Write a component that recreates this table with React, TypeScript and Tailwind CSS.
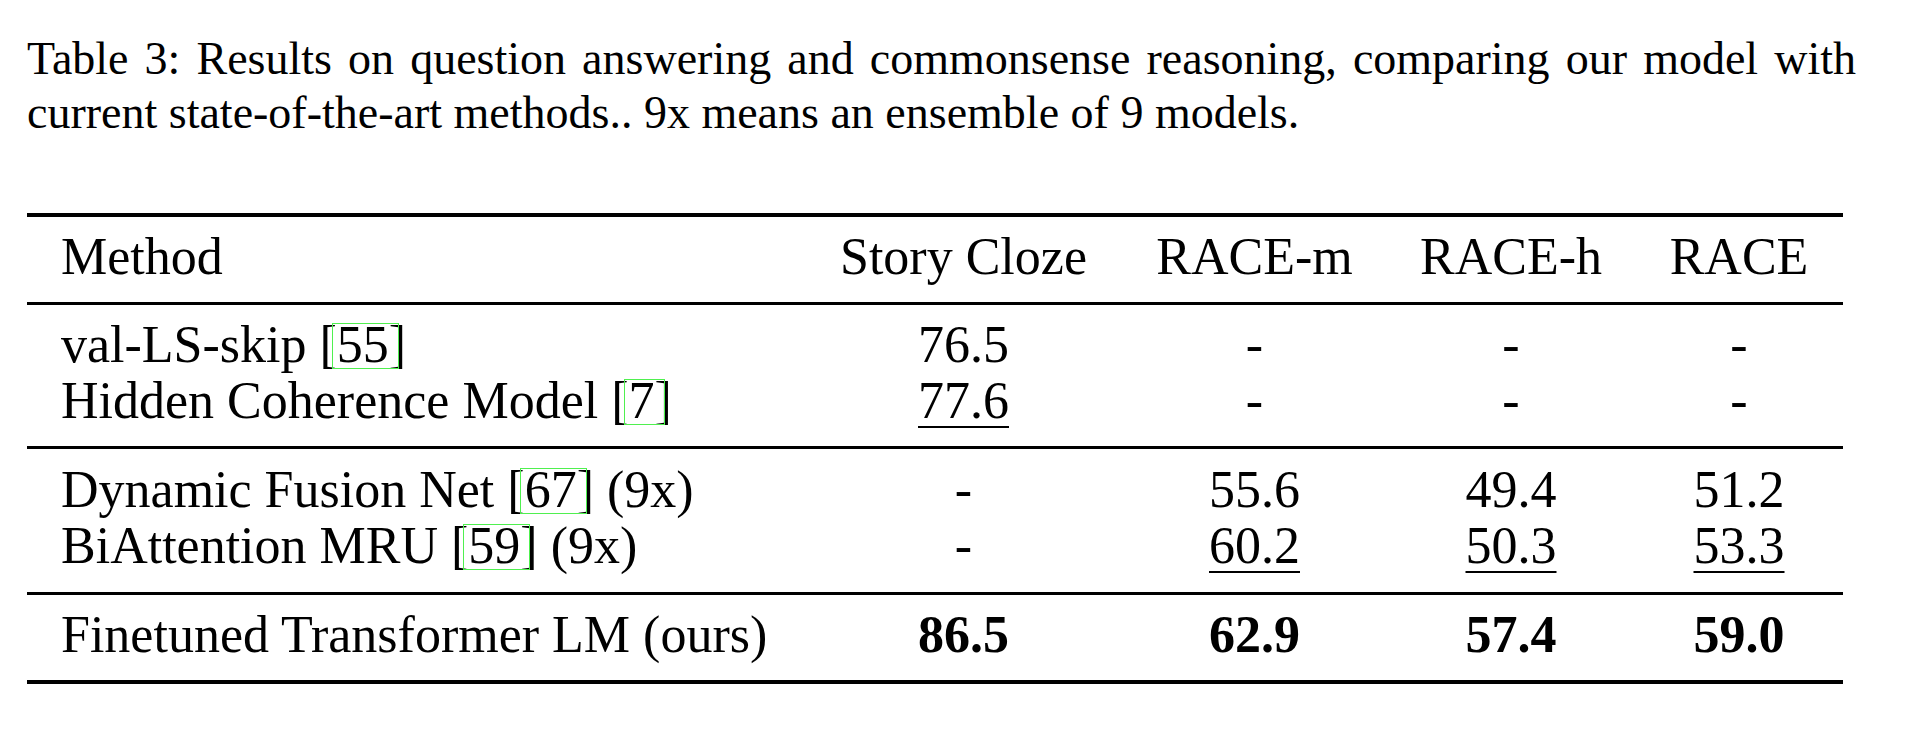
import React from "react";

type Cell = { text: string; underline?: boolean; bold?: boolean };

const cols = "grid grid-cols-[778px_317px_265px_248px_208px]";

function Cite({ n }: { n: string }) {
  return (
    <>
      [
      <span className="relative">
        {n}
        <span className="absolute -left-[5px] -right-[10px] top-[7px] bottom-[4px] border border-[#4ff04f]" />
      </span>
      ]
    </>
  );
}

const groups: { method: React.ReactNode; cells: Cell[] }[][] = [
  [
    {
      method: <>val-LS-skip <Cite n="55" /></>,
      cells: [{ text: "76.5" }, { text: "-" }, { text: "-" }, { text: "-" }],
    },
    {
      method: <>Hidden Coherence Model <Cite n="7" /></>,
      cells: [{ text: "77.6", underline: true }, { text: "-" }, { text: "-" }, { text: "-" }],
    },
  ],
  [
    {
      method: <>Dynamic Fusion Net <Cite n="67" /> (9x)</>,
      cells: [{ text: "-" }, { text: "55.6" }, { text: "49.4" }, { text: "51.2" }],
    },
    {
      method: <>BiAttention MRU <Cite n="59" /> (9x)</>,
      cells: [
        { text: "-" },
        { text: "60.2", underline: true },
        { text: "50.3", underline: true },
        { text: "53.3", underline: true },
      ],
    },
  ],
  [
    {
      method: <>Finetuned Transformer LM (ours)</>,
      cells: [
        { text: "86.5", bold: true },
        { text: "62.9", bold: true },
        { text: "57.4", bold: true },
        { text: "59.0", bold: true },
      ],
    },
  ],
];

function Row({ method, cells }: { method: React.ReactNode; cells: Cell[] }) {
  return (
    <div className={cols}>
      <div className="pl-[34px] whitespace-nowrap">{method}</div>
      {cells.map((c, i) => (
        <div key={i} className="text-center">
          <span
            className={`${c.bold ? "font-bold" : ""} ${
              c.underline ? "underline decoration-[2px] underline-offset-[8px]" : ""
            }`}
          >
            {c.text}
          </span>
        </div>
      ))}
    </div>
  );
}

export default function App() {
  return (
    <div className="h-[738px] w-[1920px] bg-white text-black font-['Liberation_Serif','Times_New_Roman',serif]">
      <p className="ml-[27px] w-[1829px] pt-[32px] text-justify text-[46px] leading-[54px]">
        Table 3: Results on question answering and commonsense reasoning, comparing our model with current
        state-of-the-art methods.. 9x means an ensemble of 9 models.
      </p>

      <div className="ml-[27px] mt-[73px] w-[1816px] text-[52px] leading-[56px]">
        <div className="h-1 bg-black" />
        <div className={`${cols} pt-[12px] pb-[17px]`}>
          <div className="pl-[34px]">Method</div>
          <div className="text-center">Story Cloze</div>
          <div className="text-center">RACE-m</div>
          <div className="text-center">RACE-h</div>
          <div className="text-center">RACE</div>
        </div>
        {groups.map((g, gi) => (
          <div key={gi}>
            <div className="h-[3px] bg-black" />
            <div className={gi === 1 ? "pt-[13px] pb-[18px]" : "pt-[12px] pb-[17px]"}>
              {g.map((r, ri) => (
                <Row key={ri} method={r.method} cells={r.cells} />
              ))}
            </div>
          </div>
        ))}
        <div className="h-1 bg-black" />
      </div>
    </div>
  );
}
